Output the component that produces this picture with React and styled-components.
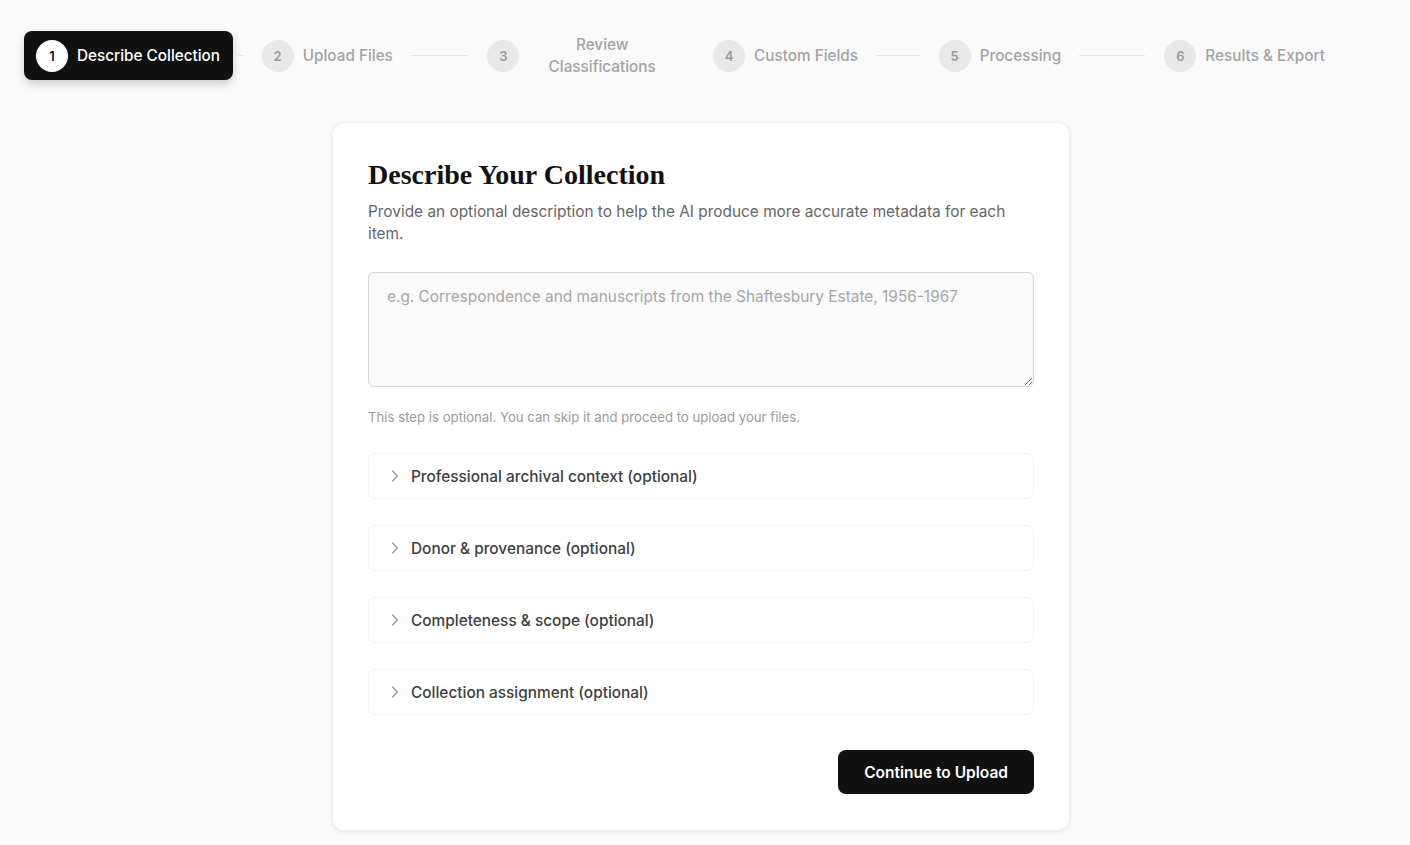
import React from 'react';
import styled, { createGlobalStyle } from 'styled-components';
import { ChevronRight } from 'lucide-react';

const GlobalStyle = createGlobalStyle`
  body {
    margin: 0;
    background: #fafafa;
    font-family: Inter, "Noto Sans", "Liberation Sans", sans-serif;
    color: #171717;
  }
  * { box-sizing: border-box; }
`;

const steps = [
  'Describe Collection',
  'Upload Files',
  'Review Classifications',
  'Custom Fields',
  'Processing',
  'Results & Export',
];

const sections = [
  'Professional archival context (optional)',
  'Donor & provenance (optional)',
  'Completeness & scope (optional)',
  'Collection assignment (optional)',
];

const Page = styled.div`
  min-height: 845px;
  padding: 25px 0 14px;
`;

const Stepper = styled.nav`
  display: flex;
  align-items: center;
  padding: 0 32px 0 24px;
`;

const Step = styled.div`
  flex: 1 1 0;
  min-width: 0;
  display: flex;
  align-items: center;
`;

const StepButton = styled.div`
  flex: 0 1 auto;
  min-width: 0;
  display: flex;
  align-items: center;
  gap: 9px;
  padding: 8.5px 13px 8.5px 12px;
  border-radius: 8px;
  background: ${(p) => (p.$active ? '#111111' : 'transparent')};
  box-shadow: ${(p) => (p.$active ? '0 4px 10px rgba(0, 0, 0, 0.18)' : 'none')};
`;

const StepNumber = styled.span`
  flex: none;
  width: 32px;
  height: 32px;
  border-radius: 50%;
  display: flex;
  align-items: center;
  justify-content: center;
  font-size: 13px;
  font-weight: 600;
  background: ${(p) => (p.$active ? '#ffffff' : '#e8e8e8')};
  color: ${(p) => (p.$active ? '#111111' : '#9a9a9a')};
`;

const StepLabel = styled.span`
  font-size: 15.3px;
  font-weight: 500;
  line-height: 22px;
  text-align: center;
  color: ${(p) => (p.$active ? '#ffffff' : '#a3a3a3')};
`;

const Connector = styled.span`
  flex: 1 1 0;
  min-width: 0;
  height: 1px;
  margin: 0 7px 0 5px;
  background: #e3e3e3;
`;

const Main = styled.main`
  display: flex;
  justify-content: center;
  padding-right: 8px;
  margin-top: 36px;
`;

const Card = styled.section`
  width: 738px;
  background: #ffffff;
  border: 1px solid #efefef;
  border-radius: 12px;
  box-shadow: 0 1px 4px rgba(0, 0, 0, 0.08);
  padding: 35px 35px 36px;
  display: flex;
  flex-direction: column;
`;

const Title = styled.h1`
  margin: 0;
  font-family: "Liberation Serif", "DejaVu Serif", serif;
  font-size: 28px;
  font-weight: 700;
  line-height: 34px;
  color: #111111;
`;

const Subtitle = styled.p`
  margin: 9px 0 0;
  font-size: 15.4px;
  line-height: 22px;
  color: #666666;
`;

const TextArea = styled.textarea`
  margin-top: 27px;
  width: 100%;
  height: 115px;
  padding: 14px 18px;
  border: 1px solid #d6d6d6;
  border-radius: 6px;
  background: #fafafa;
  font-family: inherit;
  font-size: 15.4px;
  line-height: 20px;
  color: #171717;
  resize: vertical;
  outline: none;

  &::placeholder {
    color: #a6a6a6;
  }
`;

const Hint = styled.p`
  margin: 20px 0 0;
  font-size: 13.2px;
  line-height: 20px;
  color: #9b9b9b;
`;

const SectionList = styled.div`
  margin-top: 26px;
  display: flex;
  flex-direction: column;
  gap: 26px;
`;

const Section = styled.div`
  height: 46px;
  display: flex;
  align-items: center;
  gap: 6px;
  padding: 0 16px;
  border: 1px solid #f2f2f2;
  border-radius: 8px;
  font-size: 15.4px;
  font-weight: 500;
  color: #404040;
  cursor: pointer;

  svg {
    color: #999999;
    flex: none;
  }
`;

const Footer = styled.div`
  margin-top: 35px;
  display: flex;
  justify-content: flex-end;
`;

const PrimaryButton = styled.button`
  height: 44px;
  padding: 0 26px;
  border: none;
  border-radius: 8px;
  background: #111111;
  color: #ffffff;
  font-family: inherit;
  font-size: 15.5px;
  font-weight: 600;
  cursor: pointer;
`;

export default function App() {
  return (
    <Page>
      <GlobalStyle />
      <Stepper>
        {steps.map((label, i) => {
          const active = i === 0;
          return (
            <Step key={label}>
              <StepButton $active={active}>
                <StepNumber $active={active}>{i + 1}</StepNumber>
                <StepLabel $active={active}>{label}</StepLabel>
              </StepButton>
              {i < steps.length - 1 && <Connector />}
            </Step>
          );
        })}
      </Stepper>

      <Main>
        <Card>
          <Title>Describe Your Collection</Title>
          <Subtitle>
            Provide an optional description to help the AI produce more accurate metadata for each
            item.
          </Subtitle>
          <TextArea placeholder="e.g. Correspondence and manuscripts from the Shaftesbury Estate, 1956-1967" />
          <Hint>This step is optional. You can skip it and proceed to upload your files.</Hint>

          <SectionList>
            {sections.map((s) => (
              <Section key={s}>
                <ChevronRight size={20} strokeWidth={1.5} />
                {s}
              </Section>
            ))}
          </SectionList>

          <Footer>
            <PrimaryButton>Continue to Upload</PrimaryButton>
          </Footer>
        </Card>
      </Main>
    </Page>
  );
}
